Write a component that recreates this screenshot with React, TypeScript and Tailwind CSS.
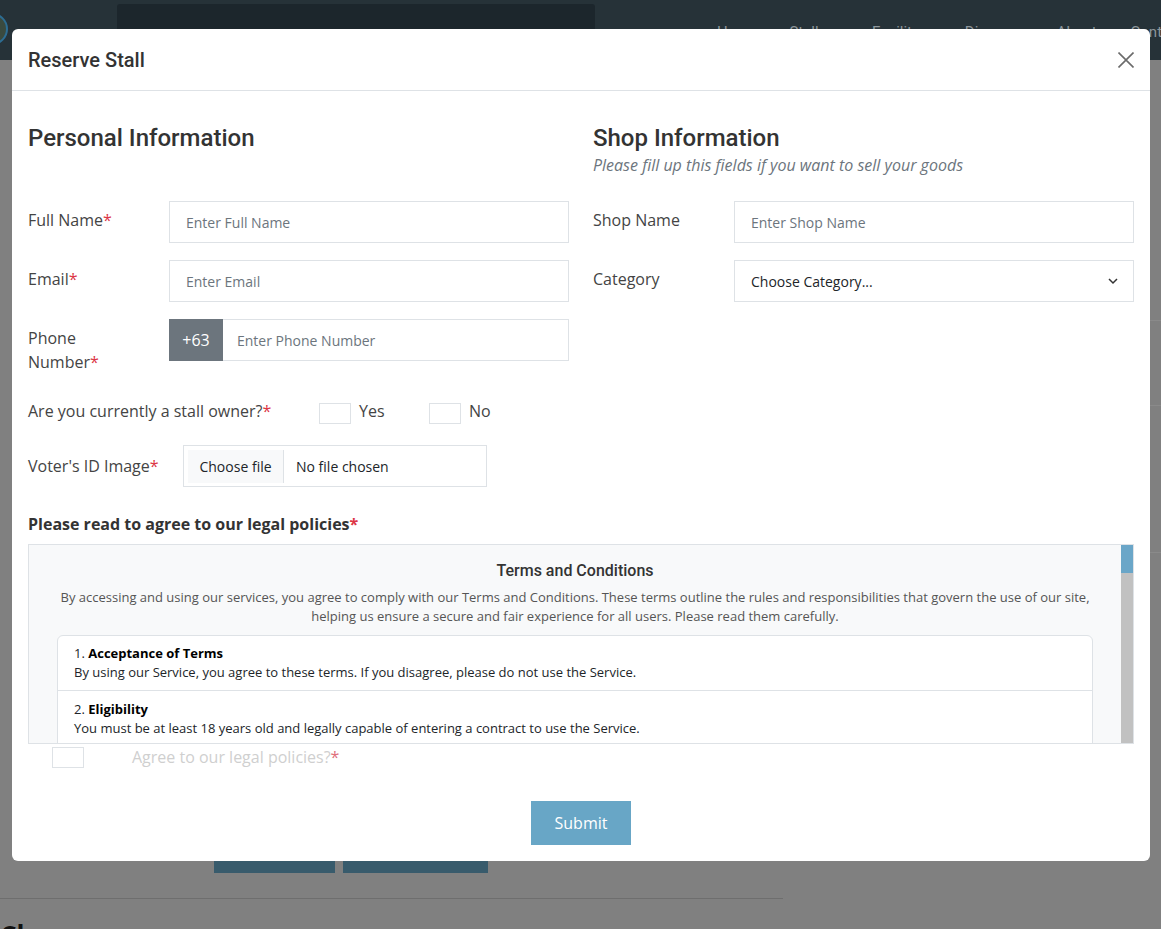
import type React from "react";

const Req = () => <span className="text-[#dc3545]">*</span>;

const Field: React.FC<React.PropsWithChildren<{ label: React.ReactNode }>> = ({
  label,
  children,
}) => (
  <div className="flex items-start">
    <label className="w-[141px] shrink-0 pr-[20px] pt-[7px] text-[16px] leading-6 text-[#444]">
      {label}
    </label>
    <div className="flex-1">{children}</div>
  </div>
);

const TextInput: React.FC<{ placeholder: string }> = ({ placeholder }) => (
  <input
    placeholder={placeholder}
    className="h-[42px] w-full border border-[#dee2e6] bg-white px-4 text-[14px] text-[#212529] outline-none placeholder:text-[#6c757d]"
  />
);

const Box: React.FC<{ className?: string }> = ({ className }) => (
  <span
    className={
      "block h-[21px] w-[32px] shrink-0 border border-[#dee2e6] bg-white " +
      (className ?? "")
    }
  />
);

const terms = [
  {
    title: "Acceptance of Terms",
    body: "By using our Service, you agree to these terms. If you disagree, please do not use the Service.",
  },
  {
    title: "Eligibility",
    body: "You must be at least 18 years old and legally capable of entering a contract to use the Service.",
  },
  {
    title: "Account Registration",
    body: "You are responsible for keeping your account details accurate and your password secure.",
  },
  {
    title: "Stall Reservation",
    body: "Reservations are subject to availability and approval by the market administration.",
  },
];

const NavBar = () => (
  <div className="relative flex h-[60px] bg-[#263238]">
    <div className="-ml-[24px] mt-[13px] h-[32px] w-[32px] shrink-0 rounded-full border-2 border-[#2d6d93] bg-[#3a4a3f]" />
    <div className="ml-[109px] mt-[4px] h-[56px] w-[478px] shrink-0 rounded-t-[3px] bg-[#1c262c]" />
    <nav className="ml-[122px] mt-[22px] flex shrink-0 gap-[34px] text-[15px] leading-5 text-[#8d969b] font-['Roboto',sans-serif]">
      <span>Home</span>
      <span className="-ml-[2px]">Stalls ▾</span>
      <span>Facility ▾</span>
      <span>Discover</span>
      <span>About</span>
      <span>Contact</span>
    </nav>
  </div>
);

const Modal = () => (
  <div className="absolute left-[12px] top-[29px] w-[1138px] rounded-[6px] bg-white">
    <div className="flex h-[62px] items-center justify-between border-b border-[#dee2e6] px-4">
      <h5 className="text-[20px] font-medium text-[#333] font-['Roboto',sans-serif]">
        Reserve Stall
      </h5>
      <svg width="16" height="16" viewBox="0 0 16 16">
        <path d="M0.5 0.5L15.5 15.5M15.5 0.5L0.5 15.5" stroke="#6b6b6b" strokeWidth="1.6" />
      </svg>
    </div>

    <div className="px-4 pb-4 pt-[31px]">
      <div className="grid grid-cols-2 gap-x-6">
        <div>
          <div className="h-[79px] pt-[2px]">
            <h2 className="text-[24px] font-medium leading-[29px] text-[#333] font-['Roboto',sans-serif]">
              Personal Information
            </h2>
          </div>
          <div className="flex flex-col gap-[17px]">
            <Field label={<>Full Name<Req /></>}>
              <TextInput placeholder="Enter Full Name" />
            </Field>
            <Field label={<>Email<Req /></>}>
              <TextInput placeholder="Enter Email" />
            </Field>
            <Field label={<>Phone Number<Req /></>}>
              <div className="flex h-[42px]">
                <span className="flex w-[54px] items-center justify-center bg-[#6c757d] text-[16px] text-white">
                  +63
                </span>
                <input
                  placeholder="Enter Phone Number"
                  className="h-[42px] flex-1 border border-l-0 border-[#dee2e6] px-[14px] text-[14px] outline-none placeholder:text-[#6c757d]"
                />
              </div>
            </Field>
            <div className="flex h-[37px] items-start text-[16px] leading-6 text-[#444]">
              <span className="w-[291px] pt-[8px]">
                Are you currently a stall owner?<Req />
              </span>
              <span className="flex w-[110px] items-start">
                <Box className="mt-[12px]" />
                <span className="ml-[8px] pt-[8px]">Yes</span>
              </span>
              <span className="flex items-start">
                <Box className="mt-[12px]" />
                <span className="ml-[8px] pt-[8px]">No</span>
              </span>
            </div>
            <div className="flex items-center">
              <label className="w-[155px] text-[16px] leading-6 text-[#444]">
                Voter's ID Image<Req />
              </label>
              <div className="flex h-[42px] w-[304px] items-center border border-[#dee2e6] p-[4px]">
                <span className="flex h-[33px] w-[96px] items-center justify-center border-r border-[#dee2e6] bg-[#f8f9fa] text-[14px] text-[#212529]">
                  Choose file
                </span>
                <span className="ml-[12px] text-[14px] text-[#212529]">No file chosen</span>
              </div>
            </div>
          </div>
        </div>

        <div>
          <div className="h-[79px] pt-[2px]">
            <h2 className="text-[24px] font-medium leading-[29px] text-[#333] font-['Roboto',sans-serif]">
              Shop Information
            </h2>
            <p className="text-[16px] italic leading-6 text-[#6c757d]">
              Please fill up this fields if you want to sell your goods
            </p>
          </div>
          <div className="flex flex-col gap-[17px]">
            <Field label="Shop Name">
              <TextInput placeholder="Enter Shop Name" />
            </Field>
            <Field label="Category">
              <div className="flex h-[42px] items-center justify-between border border-[#dee2e6] pl-4 pr-[14px] text-[14px] text-[#212529]">
                <span>Choose Category...</span>
                <svg width="12" height="12" viewBox="0 0 12 12">
                  <path d="M2 4l4 4 4-4" fill="none" stroke="#333" strokeWidth="1.5" />
                </svg>
              </div>
            </Field>
          </div>
        </div>
      </div>

      <h6 className="mt-[25px] text-[16px] font-bold leading-6 text-[#333]">
        Please read to agree to our legal policies<Req />
      </h6>
      <div className="mt-[8px] flex h-[200px] overflow-hidden border border-[#dee2e6] bg-[#f8f9fa]">
        <div className="flex-1 overflow-hidden px-7 pt-[16px] text-center">
          <h5 className="text-[16px] font-medium leading-5 text-[#333] font-['Roboto',sans-serif]">
            Terms and Conditions
          </h5>
          <p className="mt-[7px] text-[13px] leading-[19px] text-[#555]">
            By accessing and using our services, you agree to comply with our Terms and
            Conditions. These terms outline the rules and responsibilities that govern the use
            of our site, helping us ensure a secure and fair experience for all users. Please
            read them carefully.
          </p>
          <ul className="mt-[9px] rounded-[6px] border border-[#dee2e6] bg-white text-left text-[13px] leading-[19px] text-[#212529]">
            {terms.map((t, i) => (
              <li
                key={i}
                className="border-t border-[#dee2e6] px-4 pb-[8px] pt-[9px] first:border-t-0 first:pt-[8px]"
              >
                <div>
                  {i + 1}. <b className="font-bold text-black">{t.title}</b>
                </div>
                <div>{t.body}</div>
              </li>
            ))}
          </ul>
        </div>
        <div className="flex w-[12px] flex-col bg-[#c1c1c1]">
          <div className="h-[28px] bg-[#6aa6c8]" />
        </div>
      </div>

      <div className="mt-[1px] flex h-6 items-start px-6">
        <Box className="mt-[2px]" />
        <span className="ml-[48px] text-[16px] leading-6 text-[#cfcfcf]">
          Agree to our legal policies?<span className="text-[#e0707c]">*</span>
        </span>
      </div>

      <div className="mt-[32px] flex justify-center">
        <button className="h-[44px] w-[100px] bg-[#68a6c6] text-[16px] text-white">
          Submit
        </button>
      </div>
    </div>
  </div>
);

export default function App() {
  return (
    <div className="relative h-[929px] overflow-hidden bg-[#808080] font-['Open_Sans',sans-serif]">
      <NavBar />
      <div className="flex h-[773px] flex-col items-end">
        <div className="mt-[260px] h-px w-[11px] bg-[#8a8a8a]" />
        <div className="mt-[84px] h-px w-[11px] bg-[#8a8a8a]" />
        <div className="mt-[146px] h-px w-[11px] bg-[#8a8a8a]" />
      </div>
      <div className="flex gap-[8px] pl-[214px]">
        <div className="h-[40px] w-[121px] bg-[#385b6c]" />
        <div className="h-[40px] w-[145px] bg-[#385b6c]" />
      </div>
      <div className="mt-[25px] h-px w-[783px] bg-[#6e6e6e]" />
      <h3 className="mt-[20px] text-[26px] font-bold leading-8 text-[#111]">Closure</h3>
      <Modal />
    </div>
  );
}
